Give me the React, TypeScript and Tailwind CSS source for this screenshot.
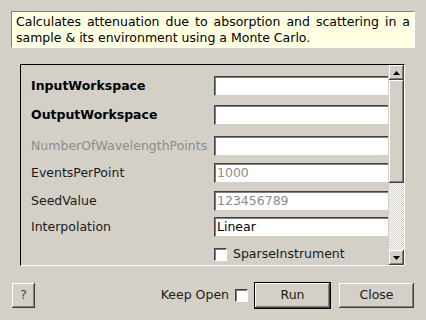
import React from "react";

const raised =
  "shadow-[inset_-1px_-1px_0_#404040,inset_1px_1px_0_#ffffff,inset_-2px_-2px_0_#808080]";

function Field({ value, gray }: { value?: string; gray?: boolean }) {
  return (
    <div
      className={`h-[20px] w-[174px] bg-white border-t border-l border-[#404040] border-b border-b-[#d4d0c8] shadow-[inset_1px_1px_0_#808080] flex items-center pl-[2px] ${
        gray ? "text-[#8c8c8c]" : "text-black"
      }`}
    >
      {value}
    </div>
  );
}

function Row({
  label,
  mt,
  bold,
  dim,
  value,
  gray,
}: {
  label: string;
  mt: string;
  bold?: boolean;
  dim?: boolean;
  value?: string;
  gray?: boolean;
}) {
  return (
    <div className={`flex items-center h-[20px] ${mt}`}>
      <div
        className={`w-[193px] pl-[10px] whitespace-nowrap ${bold ? "font-bold text-black" : ""} ${
          dim ? "text-[#8c8c8c]" : ""
        } ${!bold && !dim ? "text-[#1a1a1a]" : ""}`}
      >
        {label}
      </div>
      <Field value={value} gray={gray} />
    </div>
  );
}

function CheckBox() {
  return (
    <div className="w-[13px] h-[13px] bg-white border-t border-l border-[#404040] border-r border-b border-r-white border-b-white shadow-[inset_1px_1px_0_#808080]" />
  );
}

export default function App() {
  return (
    <div
      className="w-[426px] h-[320px] bg-[#d4d0c8] text-[12.5px] leading-[16px] text-[#1a1a1a] flex flex-col overflow-hidden"
      style={{ fontFamily: '"DejaVu Sans", sans-serif' }}
    >
      <div className="ml-[11px] mt-[11px] w-[404px] h-[37px] bg-[#ffffe1] border-t border-l border-[#808080] border-b border-r border-b-white border-r-white pl-[4px] pr-[4px] pt-[2px] text-justify text-black">
        Calculates attenuation due to absorption and scattering in a sample &amp; its environment using a Monte Carlo.
      </div>

      <div className="ml-[20px] mt-[16px] w-[385px] h-[202px] border-t border-l border-black border-b border-r border-b-white border-r-white flex">
        <div className="flex-1 flex flex-col overflow-hidden">
          <Row label="InputWorkspace" mt="mt-[11px]" bold />
          <Row label="OutputWorkspace" mt="mt-[9px]" bold />
          <Row label="NumberOfWavelengthPoints" mt="mt-[11px]" dim />
          <Row label="EventsPerPoint" mt="mt-[7px]" value="1000" gray />
          <Row label="SeedValue" mt="mt-[8px]" value="123456789" gray />
          <Row label="Interpolation" mt="mt-[6px]" value="Linear" />
          <div className="flex items-center h-[20px] mt-[7px]">
            <div className="w-[193px]" />
            <CheckBox />
            <span className="ml-[6px] text-[#1a1a1a]">SparseInstrument</span>
          </div>
        </div>
        <div className="w-[15px] flex flex-col mr-[0px]">
          <div className={`h-[15px] bg-[#d4d0c8] ${raised} flex items-center justify-center`}>
            <svg width="7" height="4" viewBox="0 0 7 4">
              <polygon points="3.5,0 7,4 0,4" fill="#000" />
            </svg>
          </div>
          <div className={`h-[103px] bg-[#d4d0c8] ${raised}`} />
          <div className="flex-1 bg-[repeating-conic-gradient(#ffffff_0_25%,#d4d0c8_0_50%)] bg-[length:2px_2px]" />
          <div className={`h-[15px] bg-[#d4d0c8] ${raised} flex items-center justify-center`}>
            <svg width="7" height="4" viewBox="0 0 7 4">
              <polygon points="0,0 7,0 3.5,4" fill="#000" />
            </svg>
          </div>
        </div>
      </div>

      <div className="flex items-center mt-[16px] h-[26px]">
        <div
          className={`ml-[12px] w-[23px] h-[25px] ${raised} flex items-center justify-center text-[#444]`}
        >
          ?
        </div>
        <div className="flex-1" />
        <span className="text-[#1a1a1a]">Keep Open</span>
        <div className="ml-[6px]">
          <CheckBox />
        </div>
        <div className="ml-[6px] w-[77px] h-[27px] border border-black">
          <div className={`w-full h-full ${raised} flex items-center justify-center text-[#1a1a1a]`}>
            Run
          </div>
        </div>
        <div
          className={`ml-[8px] mr-[12px] w-[75px] h-[25px] ${raised} flex items-center justify-center text-[#1a1a1a]`}
        >
          Close
        </div>
      </div>
    </div>
  );
}
